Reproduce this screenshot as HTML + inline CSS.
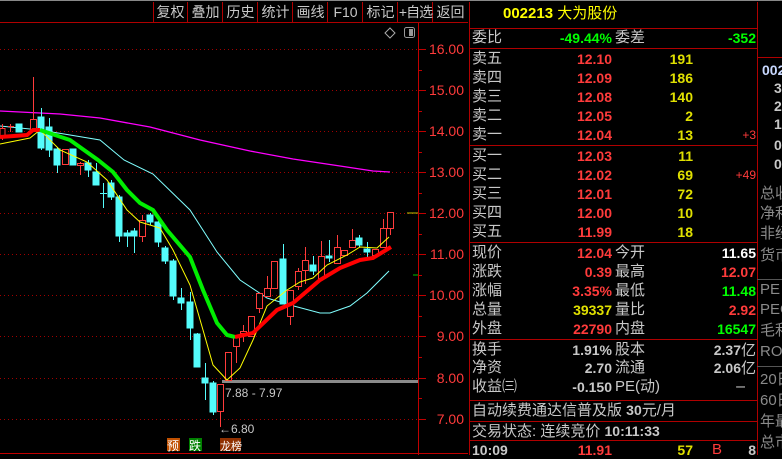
<!DOCTYPE html>
<html><head><meta charset="utf-8"><style>
body{margin:0;background:#000;width:782px;height:455px;overflow:hidden;position:relative;font-family:"Liberation Sans","Noto Sans CJK SC",sans-serif}
.t{position:absolute;white-space:nowrap;line-height:18px}
.l{color:#c8c8c8;font-size:15px}
.n{font-weight:bold;font-size:14px;text-align:right}
.r{color:#ff3b3b}.y{color:#e0e000}.g{color:#00ff00}.w{color:#fff}.s{color:#c8c8c8}.gr{color:#8a8a8a;font-size:15px}
.hl{position:absolute;height:1px;background:#b00000}
.vl{position:absolute;width:1px;background:#b00000}
.btn{position:absolute;top:3px;color:#c8c8c8;font-size:14px;line-height:18px;text-align:center}
</style></head><body>
<div style="position:absolute;left:0;top:0;width:782px;height:1px;background:#888"></div>
<div class="hl" style="left:0;top:22px;width:468px"></div>
<div class="vl" style="left:153px;top:2px;height:20px"></div>
<div class="vl" style="left:187px;top:2px;height:20px"></div>
<div class="vl" style="left:222px;top:2px;height:20px"></div>
<div class="vl" style="left:257px;top:2px;height:20px"></div>
<div class="vl" style="left:292px;top:2px;height:20px"></div>
<div class="vl" style="left:327px;top:2px;height:20px"></div>
<div class="vl" style="left:362px;top:2px;height:20px"></div>
<div class="vl" style="left:397px;top:2px;height:20px"></div>
<div class="vl" style="left:432px;top:2px;height:20px"></div>
<div class="btn" style="left:153px;width:35px">复权</div>
<div class="btn" style="left:188px;width:35px">叠加</div>
<div class="btn" style="left:223px;width:35px">历史</div>
<div class="btn" style="left:258px;width:35px">统计</div>
<div class="btn" style="left:293px;width:35px">画线</div>
<div class="btn" style="left:328px;width:35px">F10</div>
<div class="btn" style="left:363px;width:35px">标记</div>
<div class="btn" style="left:398px;width:35px;letter-spacing:-1px">+自选</div>
<div class="btn" style="left:433px;width:35px">返回</div>

<svg style="position:absolute;left:0;top:0" width="468" height="455">
<g stroke="#a00000" stroke-dasharray="1,3" stroke-width="1">
<line x1="0" y1="49.5" x2="418" y2="49.5"/><line x1="0" y1="90.5" x2="418" y2="90.5"/><line x1="0" y1="131.5" x2="418" y2="131.5"/><line x1="0" y1="172.5" x2="418" y2="172.5"/><line x1="0" y1="213.5" x2="418" y2="213.5"/><line x1="0" y1="254.5" x2="418" y2="254.5"/><line x1="0" y1="295.5" x2="418" y2="295.5"/><line x1="0" y1="336.5" x2="418" y2="336.5"/><line x1="0" y1="378.5" x2="418" y2="378.5"/><line x1="0" y1="419.5" x2="418" y2="419.5"/>
</g>
<line x1="418.5" y1="23" x2="418.5" y2="455" stroke="#c00000"/>
<g stroke="#c00000">
<line x1="418" y1="49.5" x2="426" y2="49.5"/><line x1="418" y1="70.5" x2="422" y2="70.5"/><line x1="418" y1="90.5" x2="426" y2="90.5"/><line x1="418" y1="111.5" x2="422" y2="111.5"/><line x1="418" y1="131.5" x2="426" y2="131.5"/><line x1="418" y1="152.5" x2="422" y2="152.5"/><line x1="418" y1="172.5" x2="426" y2="172.5"/><line x1="418" y1="193.5" x2="422" y2="193.5"/><line x1="418" y1="213.5" x2="426" y2="213.5"/><line x1="418" y1="234.5" x2="422" y2="234.5"/><line x1="418" y1="254.5" x2="426" y2="254.5"/><line x1="418" y1="275.5" x2="422" y2="275.5"/><line x1="418" y1="295.5" x2="426" y2="295.5"/><line x1="418" y1="316.5" x2="422" y2="316.5"/><line x1="418" y1="336.5" x2="426" y2="336.5"/><line x1="418" y1="357.5" x2="422" y2="357.5"/><line x1="418" y1="378.5" x2="426" y2="378.5"/><line x1="418" y1="398.5" x2="422" y2="398.5"/><line x1="418" y1="419.5" x2="426" y2="419.5"/>
<line x1="0" y1="453.5" x2="468" y2="453.5"/>
</g>
<line x1="407" y1="213" x2="418" y2="213" stroke="#c0c000"/>
<line x1="413" y1="275" x2="418" y2="275" stroke="#00c000"/>
<g fill="#ff3b3b" font-family="Liberation Sans" font-size="14" text-anchor="end">
<text x="464" y="54">16.00</text><text x="464" y="95">15.00</text><text x="464" y="136">14.00</text><text x="464" y="177">13.00</text><text x="464" y="218">12.00</text><text x="464" y="259">11.00</text><text x="464" y="300">10.00</text><text x="464" y="341">9.00</text><text x="464" y="383">8.00</text><text x="464" y="424">7.00</text>
</g>
<path d="M385 33 L390 28 L395 33 L390 38 Z" fill="none" stroke="#aaa"/>
<rect x="404.5" y="27.5" width="10" height="10" rx="2" fill="none" stroke="#999"/><rect x="409" y="29" width="4" height="7" fill="#999"/>
<polyline fill="none" stroke="#ff00ff" stroke-width="1.3" points="0,111 60,114 100,118 150,127 200,140 250,151 293,159 340,166 373,171 390,172"/>
<rect x="222" y="380" width="196" height="3" fill="#8a8a8a"/>
<polyline fill="none" stroke="#80ffff" stroke-width="1" points="0,126 40,130 100,140 124,160 153,174 190,210 217,252 240,280 267,298 290,305 320,313 330,313 350,306 367,293 389,271"/>
<g stroke-width="1">
<g stroke="#ff3b3b" fill="#000">
<line x1="2.5" y1="124" x2="2.5" y2="140"/><rect x="0" y="128.5" width="5" height="9"/>
<line x1="10.5" y1="124" x2="10.5" y2="132"/><line x1="8" y1="126.5" x2="14" y2="126.5"/>
<line x1="33.5" y1="77" x2="33.5" y2="132"/><rect x="30.5" y="119.5" width="6" height="10"/>
<rect x="62.5" y="149.5" width="6" height="15"/>
<line x1="80.5" y1="162" x2="80.5" y2="175"/><rect x="77.5" y="163.5" width="6" height="2"/>
<line x1="142.5" y1="215" x2="142.5" y2="242"/><rect x="139.5" y="220.5" width="6" height="16"/>
<line x1="220.5" y1="384" x2="220.5" y2="427"/><rect x="217.5" y="384.5" width="6" height="27"/>
<rect x="225.5" y="352.5" width="6" height="28"/>
<line x1="236.5" y1="337" x2="236.5" y2="363"/><rect x="233.5" y="337.5" width="6" height="9"/>
<line x1="243.5" y1="325" x2="243.5" y2="342"/><rect x="240.5" y="331.5" width="6" height="2"/>
<rect x="248.5" y="316.5" width="6" height="20"/>
<line x1="259.5" y1="293" x2="259.5" y2="313"/><rect x="256.5" y="293.5" width="6" height="15"/>
<line x1="267.5" y1="276" x2="267.5" y2="297"/><rect x="264.5" y="288.5" width="6" height="8"/>
<rect x="271.5" y="261.5" width="6" height="27"/>
<line x1="290.5" y1="290" x2="290.5" y2="325"/><rect x="287.5" y="290.5" width="6" height="26"/>
<line x1="298.5" y1="268" x2="298.5" y2="290"/><rect x="295.5" y="271.5" width="6" height="15"/>
<line x1="305.5" y1="247" x2="305.5" y2="284"/><rect x="302.5" y="260.5" width="6" height="10"/>
<line x1="321.5" y1="241" x2="321.5" y2="280"/><rect x="318.5" y="256.5" width="6" height="22"/>
<line x1="337.5" y1="235" x2="337.5" y2="263"/><rect x="334.5" y="247.5" width="6" height="16"/>
<rect x="341.5" y="250.5" width="6" height="5"/>
<line x1="352.5" y1="229" x2="352.5" y2="247"/><rect x="349.5" y="240.5" width="6" height="7"/>
<rect x="372.5" y="249.5" width="6" height="6"/>
<line x1="383.5" y1="219" x2="383.5" y2="247"/><rect x="380.5" y="228.5" width="6" height="19"/>
<line x1="390.5" y1="212" x2="390.5" y2="235"/><rect x="387.5" y="212.5" width="6" height="16"/>
</g>
<g stroke="#54fcfc" fill="#54fcfc">
<rect x="16" y="124" width="6" height="8"/>
<line x1="41.5" y1="108" x2="41.5" y2="150"/><rect x="38" y="117" width="6" height="31"/>
<line x1="49.5" y1="118" x2="49.5" y2="157"/><rect x="46" y="127" width="6" height="23"/>
<line x1="57.5" y1="147" x2="57.5" y2="173"/><rect x="54" y="149" width="6" height="16"/>
<rect x="70" y="149" width="6" height="16"/>
<line x1="88.5" y1="160" x2="88.5" y2="177"/><rect x="85" y="163" width="6" height="7"/>
<line x1="96.5" y1="163" x2="96.5" y2="185"/><rect x="93" y="172" width="6" height="13"/>
<line x1="103.5" y1="183" x2="103.5" y2="208"/><line x1="100" y1="193.5" x2="107" y2="193.5"/>
<line x1="111.5" y1="180" x2="111.5" y2="200"/><rect x="108" y="183" width="6" height="14"/>
<line x1="119.5" y1="195" x2="119.5" y2="242"/><rect x="116" y="197" width="6" height="39"/>
<line x1="127.5" y1="230" x2="127.5" y2="247"/><rect x="124" y="233" width="6" height="3"/>
<line x1="134.5" y1="228" x2="134.5" y2="253"/><rect x="131" y="231" width="6" height="5"/>
<line x1="150.5" y1="213" x2="150.5" y2="225"/><rect x="147" y="215" width="6" height="7"/>
<line x1="158.5" y1="215" x2="158.5" y2="247"/><rect x="155" y="222" width="6" height="20"/>
<line x1="165.5" y1="246" x2="165.5" y2="264"/><rect x="162" y="248" width="6" height="13"/>
<line x1="173.5" y1="259" x2="173.5" y2="300"/><rect x="170" y="261" width="6" height="35"/>
<line x1="181.5" y1="288" x2="181.5" y2="310"/><rect x="178" y="298" width="6" height="5"/>
<line x1="190.5" y1="292" x2="190.5" y2="340"/><rect x="187" y="302" width="6" height="26"/>
<line x1="197.5" y1="333" x2="197.5" y2="367"/><rect x="194" y="334" width="6" height="33"/>
<line x1="205.5" y1="363" x2="205.5" y2="400"/><rect x="202" y="378" width="6" height="5"/>
<line x1="213.5" y1="381" x2="213.5" y2="415"/><rect x="210" y="383" width="6" height="29"/>
<line x1="283.5" y1="244" x2="283.5" y2="304"/><rect x="280" y="259" width="6" height="45"/>
<line x1="313.5" y1="256" x2="313.5" y2="275"/><rect x="310" y="265" width="6" height="6"/>
<line x1="329.5" y1="240" x2="329.5" y2="262"/><rect x="326" y="256" width="6" height="2"/>
<line x1="359.5" y1="235" x2="359.5" y2="247"/><rect x="356" y="238" width="6" height="7"/>
<line x1="367.5" y1="242" x2="367.5" y2="257"/><rect x="364" y="249" width="6" height="3"/>
</g></g>
<polyline fill="none" stroke="#ffff00" stroke-width="1" points="0,144 30,138 40,130 60,150 87,162 107,180 127,210 140,222 160,228 173,250 190,285 203,330 213,365 227,380 240,368 253,340 267,306 287,290 300,282 313,278 327,265 347,255 360,247 377,248 389,237"/>
<polyline fill="none" stroke="#ff0000" stroke-width="4" points="0,137 27,135 33,130 40,130"/>
<polyline fill="none" stroke="#00ee00" stroke-width="4" points="40,130 70,140 98,160 113,172 127,190 140,203 153,210 167,230 190,257 203,290 217,323 227,335 235,337"/>
<polyline fill="none" stroke="#ff0000" stroke-width="4" points="235,337 253,333 277,310 293,303 320,280 340,268 360,260 373,258 391,247"/>
<text x="225" y="397" fill="#c8c8c8" font-family="Liberation Sans" font-size="12">7.88 - 7.97</text>
<text x="219" y="433" fill="#c8c8c8" font-family="Liberation Sans" font-size="12">←6.80</text>
<rect x="167" y="438" width="13" height="13" fill="#c05000"/><text x="167" y="450" fill="#fff" font-size="12" font-family="Noto Sans CJK SC">预</text>
<rect x="189" y="438" width="13" height="13" fill="#008000"/><text x="189" y="450" fill="#fff" font-size="12" font-family="Noto Sans CJK SC">跌</text>
<rect x="220" y="438" width="21" height="13" fill="#903000"/><text x="220" y="450" fill="#fff" font-size="11" font-family="Noto Sans CJK SC">龙榜</text>
</svg>

<div class="vl" style="left:469px;top:2px;height:453px"></div>
<div class="vl" style="left:757px;top:2px;height:453px"></div>
<div class="hl" style="left:469px;top:28px;width:288px"></div>
<div class="hl" style="left:469px;top:48px;width:288px"></div>
<div class="hl" style="left:469px;top:145px;width:288px"></div>
<div class="hl" style="left:469px;top:242px;width:288px"></div>
<div class="hl" style="left:469px;top:339px;width:288px"></div>
<div class="hl" style="left:469px;top:400px;width:288px"></div>
<div class="hl" style="left:469px;top:421px;width:288px"></div>
<div class="hl" style="left:469px;top:440px;width:288px"></div>
<div class="hl" style="left:757px;top:57px;width:25px"></div>
<div class="hl" style="left:757px;top:279px;width:25px;background:#555"></div>
<div class="hl" style="left:757px;top:366px;width:25px;background:#555"></div>

<div class="t" style="left:503px;top:5px;color:#ffff00;font-weight:bold;font-size:15px">002213 <span style="font-weight:normal">大为股份</span></div>
<div class="t l" style="left:472px;top:29px">委比</div><div class="t n g" style="right:170px;top:29px">-49.44%</div><div class="t l" style="left:615px;top:29px">委差</div><div class="t n g" style="right:26px;top:29px">-352</div>

<div class="t l" style="left:472px;top:50px">卖五</div><div class="t n r" style="right:170px;top:50px">12.10</div><div class="t n y" style="right:89px;top:50px">191</div>
<div class="t l" style="left:472px;top:69px">卖四</div><div class="t n r" style="right:170px;top:69px">12.09</div><div class="t n y" style="right:89px;top:69px">186</div>
<div class="t l" style="left:472px;top:88px">卖三</div><div class="t n r" style="right:170px;top:88px">12.08</div><div class="t n y" style="right:89px;top:88px">140</div>
<div class="t l" style="left:472px;top:107px">卖二</div><div class="t n r" style="right:170px;top:107px">12.05</div><div class="t n y" style="right:89px;top:107px">2</div>
<div class="t l" style="left:472px;top:126px">卖一</div><div class="t n r" style="right:170px;top:126px">12.04</div><div class="t n y" style="right:89px;top:126px">13</div><div class="t r" style="right:26px;top:126px;font-size:12px">+3</div>

<div class="t l" style="left:472px;top:147px">买一</div><div class="t n r" style="right:170px;top:147px">12.03</div><div class="t n y" style="right:89px;top:147px">11</div>
<div class="t l" style="left:472px;top:166px">买二</div><div class="t n r" style="right:170px;top:166px">12.02</div><div class="t n y" style="right:89px;top:166px">69</div><div class="t r" style="right:26px;top:166px;font-size:12px">+49</div>
<div class="t l" style="left:472px;top:185px">买三</div><div class="t n r" style="right:170px;top:185px">12.01</div><div class="t n y" style="right:89px;top:185px">72</div>
<div class="t l" style="left:472px;top:204px">买四</div><div class="t n r" style="right:170px;top:204px">12.00</div><div class="t n y" style="right:89px;top:204px">10</div>
<div class="t l" style="left:472px;top:223px">买五</div><div class="t n r" style="right:170px;top:223px">11.99</div><div class="t n y" style="right:89px;top:223px">18</div>

<div class="t l" style="left:472px;top:244px">现价</div><div class="t n r" style="right:170px;top:244px">12.04</div><div class="t l" style="left:615px;top:244px">今开</div><div class="t n w" style="right:26px;top:244px">11.65</div>
<div class="t l" style="left:472px;top:263px">涨跌</div><div class="t n r" style="right:170px;top:263px">0.39</div><div class="t l" style="left:615px;top:263px">最高</div><div class="t n r" style="right:26px;top:263px">12.07</div>
<div class="t l" style="left:472px;top:282px">涨幅</div><div class="t n r" style="right:170px;top:282px">3.35%</div><div class="t l" style="left:615px;top:282px">最低</div><div class="t n g" style="right:26px;top:282px">11.48</div>
<div class="t l" style="left:472px;top:301px">总量</div><div class="t n y" style="right:170px;top:301px">39337</div><div class="t l" style="left:615px;top:301px">量比</div><div class="t n r" style="right:26px;top:301px">2.92</div>
<div class="t l" style="left:472px;top:320px">外盘</div><div class="t n r" style="right:170px;top:320px">22790</div><div class="t l" style="left:615px;top:320px">内盘</div><div class="t n g" style="right:26px;top:320px">16547</div>

<div class="t l" style="left:472px;top:341px">换手</div><div class="t n s" style="right:170px;top:341px">1.91%</div><div class="t l" style="left:615px;top:341px">股本</div><div class="t n s" style="right:26px;top:341px">2.37<span style="font-weight:normal;font-size:15px">亿</span></div>
<div class="t l" style="left:472px;top:359px">净资</div><div class="t n s" style="right:170px;top:359px">2.70</div><div class="t l" style="left:615px;top:359px">流通</div><div class="t n s" style="right:26px;top:359px">2.06<span style="font-weight:normal;font-size:15px">亿</span></div>
<div class="t l" style="left:472px;top:378px">收益㈢</div><div class="t n s" style="right:170px;top:378px">-0.150</div><div class="t l" style="left:615px;top:378px">PE(动)</div><div class="t s" style="right:37px;top:378px">–</div>
<div class="t l" style="left:472px;top:401px">自动续费通达信普及版 <b style="font-size:14px">30</b>元/月</div>
<div class="t l" style="left:472px;top:422px">交易状态: 连续竞价 <b style="font-size:14px">10:11:33</b></div>
<div class="t n s" style="left:472px;top:441px;text-align:left">10:09</div><div class="t n r" style="right:170px;top:441px">11.91</div><div class="t n y" style="right:89px;top:441px">57</div><div class="t r" style="left:712px;top:441px;font-size:15px">B</div><div class="t n s" style="right:26px;top:441px">8</div>

<div class="t" style="left:762px;top:61px;color:#c8d8ff;font-size:14px;font-weight:bold">002</div>
<div class="t n s" style="left:774px;top:79px">3</div><div class="t n s" style="left:774px;top:97px">2</div><div class="t n s" style="left:774px;top:115px">1</div><div class="t n s" style="left:774px;top:136px">0</div><div class="t n s" style="left:774px;top:155px">0</div>
<div class="t gr" style="left:760px;top:185px">总收</div><div class="t gr" style="left:760px;top:205px">净利</div><div class="t gr" style="left:760px;top:225px">非经</div><div class="t gr" style="left:760px;top:247px">货币</div>
<div class="t gr" style="left:760px;top:281px">PE</div><div class="t gr" style="left:760px;top:301px">PEG</div><div class="t gr" style="left:760px;top:322px">毛利</div><div class="t gr" style="left:760px;top:343px">RO</div>
<div class="t gr" style="left:760px;top:371px">20日</div><div class="t gr" style="left:760px;top:392px">60日</div><div class="t gr" style="left:760px;top:413px">年最</div><div class="t gr" style="left:760px;top:434px">总市</div>
</body></html>
